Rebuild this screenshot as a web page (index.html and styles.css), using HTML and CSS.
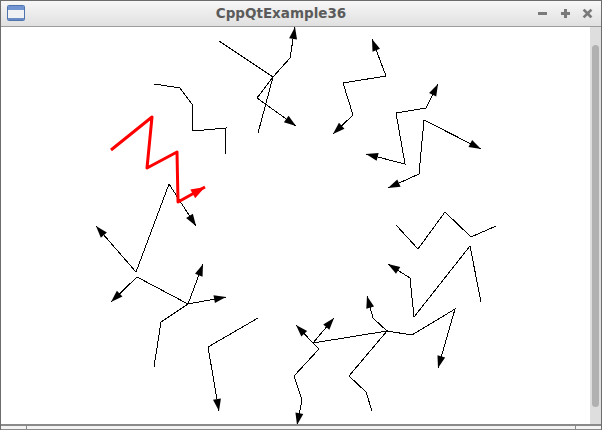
FILE: index.html
```html
<!DOCTYPE html>
<html>
<head>
<meta charset="utf-8">
<title>CppQtExample36</title>
<link rel="stylesheet" href="styles.css">
</head>
<body>
<div class="window">
  <div class="titlebar">
    <svg class="app-icon" width="18" height="16" viewBox="7 5 18 16">
      <rect x="7.5" y="5.5" width="17" height="15" rx="1" fill="#f1f2f4" stroke="#4f74ad"/>
      <rect x="8" y="6" width="16" height="4" fill="#7196d2"/>
      <rect x="8" y="18" width="16" height="2" fill="#6a8cc6"/>
    </svg>
    <div class="title">CppQtExample36</div>
    <svg class="controls" width="64" height="25" viewBox="537 1 64 25">
      <rect x="538" y="12" width="9" height="3" fill="#7a7a7a"/>
      <rect x="561" y="12" width="9" height="3" fill="#7a7a7a"/>
      <rect x="564" y="9" width="3" height="9" fill="#7a7a7a"/>
      <path d="M584.5 10.5 L590.5 16.5 M590.5 10.5 L584.5 16.5" stroke="#7a7a7a" stroke-width="2.6" stroke-linecap="square"/>
    </svg>
  </div>
  <div class="client">
    <div class="canvas">
      <svg class="drawing" width="589" height="397" viewBox="1 27 589 397">
        <defs>
          <marker id="ah" markerUnits="userSpaceOnUse" markerWidth="12" markerHeight="8" refX="12" refY="4" orient="auto" overflow="visible">
            <path d="M0,0 L12,4 L0,8 Z" fill="#000"/>
          </marker>
          <marker id="ahr" markerUnits="userSpaceOnUse" markerWidth="14" markerHeight="10" refX="14" refY="5" orient="auto" overflow="visible">
            <path d="M0,0 L14,5 L0,10 Z" fill="#ff0000"/>
          </marker>
        </defs>
        <g class="lines">
          <polyline points="219,41 273,77 257,98 296,126" marker-end="url(#ah)"/>
          <polyline points="258,133 273,77 290,58 295,27" marker-end="url(#ah)"/>
          <polyline points="154,84 180,88 192,104 193,131 226,128 225,155"/>
          <polyline points="169,184 196,226" marker-end="url(#ah)"/>
          <polyline points="169,184 136,272 96,226" marker-end="url(#ah)"/>
          <polyline points="137,277 111,302" marker-end="url(#ah)"/>
          <polyline points="137,277 188,304 226,297" marker-end="url(#ah)"/>
          <polyline points="188,304 203,264" marker-end="url(#ah)"/>
          <polyline points="188,304 161,322 154,367"/>
          <polyline points="258,318 208,347 219,411" marker-end="url(#ah)"/>
          <polyline points="313,343 296,325" marker-end="url(#ah)"/>
          <polyline points="313,343 334,318" marker-end="url(#ah)"/>
          <polyline points="313,343 387,331 349,376 366,392 372,411"/>
          <polyline points="313,343 319,349 294,376 302,400 297,425" marker-end="url(#ah)"/>
          <polyline points="387,331 412,335 455,309 438,368" marker-end="url(#ah)"/>
          <polyline points="387,331 373,318 367,296" marker-end="url(#ah)"/>
          <polyline points="396,225 418,249 445,212 471,237 496,226"/>
          <polyline points="481,302 470,246 414,317 410,278 388,264" marker-end="url(#ah)"/>
          <polyline points="343,83 386,76 372,39" marker-end="url(#ah)"/>
          <polyline points="343,83 353,115 333,134" marker-end="url(#ah)"/>
          <polyline points="396,113 426,108 438,84" marker-end="url(#ah)"/>
          <polyline points="396,113 405,164 366,154" marker-end="url(#ah)"/>
          <polyline points="424,120 481,149" marker-end="url(#ah)"/>
          <polyline points="424,120 419,174 388,188" marker-end="url(#ah)"/>
        </g>
        <polyline class="red" points="111,150 152,117 147,168 177,152 178,202 205,187" marker-end="url(#ahr)"/>
      </svg>
    </div>
    <div class="vscroll">
      <div class="vhandle"></div>
    </div>
  </div>
  <div class="hscroll">
    <div class="hs-btn hs-left"></div>
    <div class="hs-track"></div>
    <div class="hs-btn hs-right"></div>
  </div>
</div>
</body>
</html>
```

FILE: styles.css
```css
html, body {
  margin: 0;
  padding: 0;
  background: #ffffff;
}

.window {
  width: 602px;
  height: 430px;
  box-sizing: border-box;
  border: 1px solid #6c6c6c;
  border-bottom: none;
  display: flex;
  flex-direction: column;
  overflow: hidden;
  background: #ffffff;
}

.titlebar {
  height: 26px;
  box-sizing: border-box;
  border-bottom: 1px solid #9c9c9c;
  background: linear-gradient(#f7f7f7, #e0e0e0);
  display: flex;
  align-items: flex-start;
  flex: none;
}

.app-icon {
  display: block;
  margin-left: 6px;
  margin-top: 4px;
  flex: none;
}

.title {
  flex: 1;
  text-align: center;
  font-family: "DejaVu Sans", sans-serif;
  font-weight: bold;
  font-size: 13.5px;
  line-height: 25px;
  color: #5b5b5b;
  white-space: nowrap;
}

.controls {
  display: block;
  flex: none;
}

.client {
  height: 397px;
  display: flex;
  flex: none;
}

.canvas {
  flex: 1;
  background: #ffffff;
}

.drawing {
  display: block;
}

.lines polyline {
  fill: none;
  stroke: #000000;
  stroke-width: 1;
  shape-rendering: crispEdges;
}

.red {
  fill: none;
  stroke: #ff0000;
  stroke-width: 3;
  stroke-linejoin: round;
}

.vscroll {
  width: 11px;
  flex: none;
  background: #dedede;
  padding-top: 18px;
  box-sizing: border-box;
}

.vhandle {
  margin-left: 2px;
  width: 7px;
  height: 362px;
  border-radius: 3.5px;
  background: #b1b1b1;
}

.hscroll {
  height: 6px;
  flex: none;
  box-sizing: border-box;
  border-top: 2px solid #8a8a8a;
  display: flex;
  background: #f4f4f4;
}

.hs-btn {
  width: 26px;
  flex: none;
  box-sizing: border-box;
  border-bottom: 1px solid #8a8a8a;
}

.hs-left {
  border-right: 1px solid #8a8a8a;
}

.hs-right {
  border-left: 1px solid #8a8a8a;
}

.hs-track {
  flex: 1;
  box-sizing: border-box;
  border-bottom: 1px solid #8a8a8a;
}
```
